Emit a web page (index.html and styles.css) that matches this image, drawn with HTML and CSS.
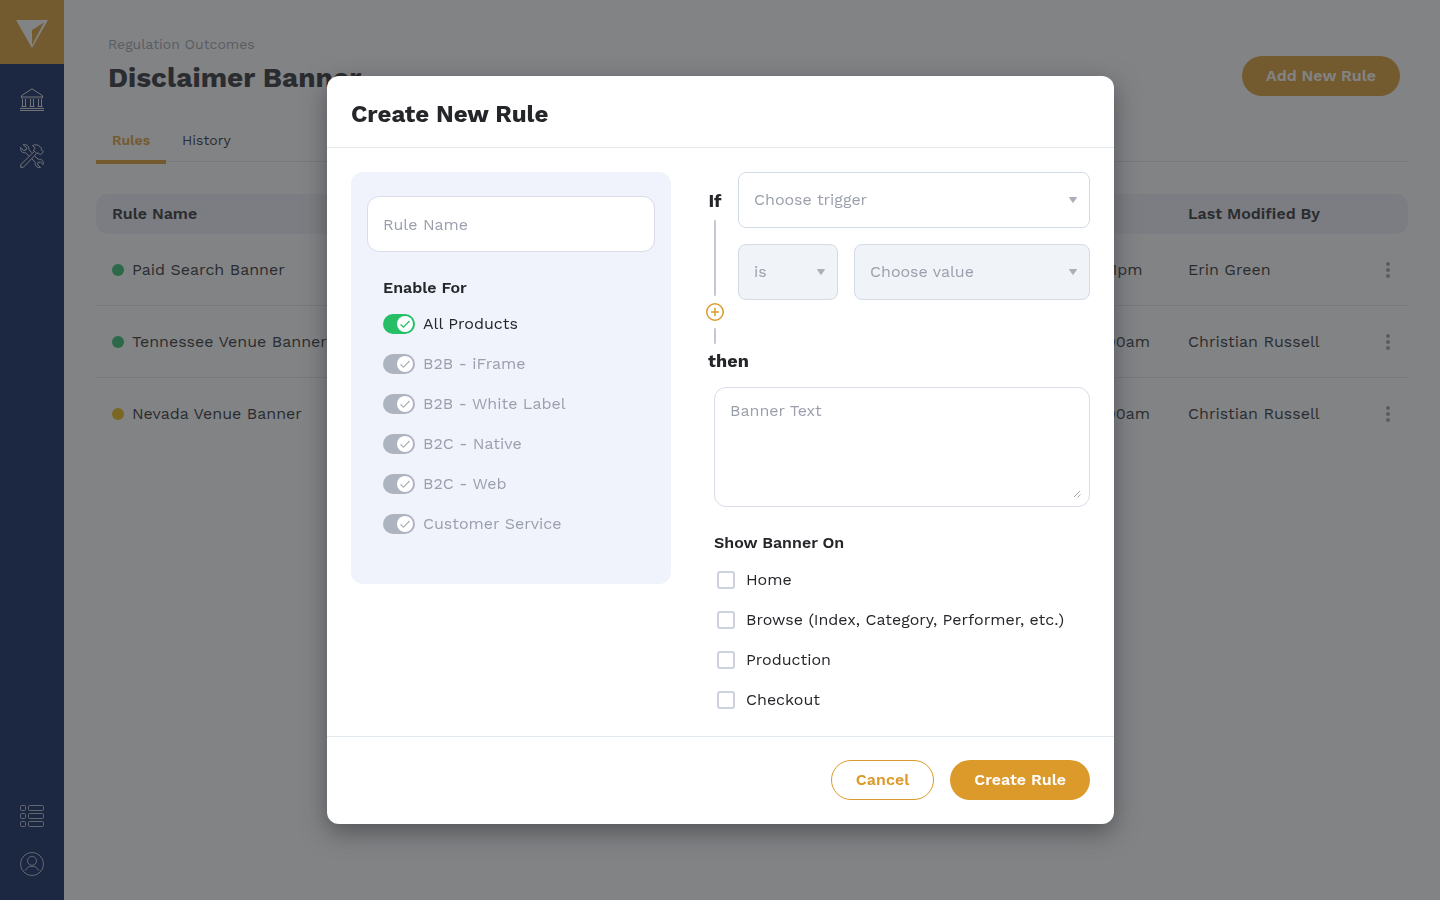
FILE: index.html
```html
<!DOCTYPE html>
<html lang="en">
<head>
    <meta charset="UTF-8">
    <meta name="viewport" content="width=device-width, initial-scale=1.0">
    <title>Disclaimer Banner</title>
    <link rel="stylesheet" href="styles.css">
</head>
<body>
    <div class="app">
        <aside class="sidebar">
            <a class="logo" href="#" aria-label="Home">
                <svg width="32" height="28" viewBox="0 0 32 28">
                    <path fill="#fff" fill-rule="evenodd" d="M0 0H32L16 28ZM28 2.6L16 10V25.2Z"/>
                </svg>
            </a>
            <nav class="side-nav">
                <a href="#" aria-label="Regulation">
                    <svg class="icon" viewBox="0 0 24 24">
                        <path d="M1.500 10V7.700L12 .8l10.500 6.900V10"/>
                        <path class="band" d="M1 8h22v2.500H1z"/>
                        <path d="M2.500 11v8M5.500 11v8M10.500 11v8M13.500 11v8M18.500 11v8M21.500 11v8M1.500 18.500h5M9.500 18.500h5M17.500 18.500h5"/>
                        <path d="M0 20.500h24M0 22.500h24"/>
                    </svg>
                </a>
                <a href="#" aria-label="Tools">
                    <svg class="icon" viewBox="0 0 24 24">
                        <path d="M3.200.8L6.600 3.600 6 6 3.500 6.600.8 3.400C-.1 6.700 2 9.200 5.500 8.700L8.800 12M3.200.8C6.500-.2 9.400 2.300 8.700 5.500L11.800 8.600"/>
                        <path d="M14.800 12.300L18.300 15.300C21.500 14.700 24.200 17.300 23.200 20.600L20.500 18 18 18.500 17.500 20.800 20.500 23.400C17.200 24.200 14.700 21.800 15.300 18.500L12 15"/>
                        <path d="M.8 20.600L14.500 7.200 16.700 9.400 3.400 23.300H.7z"/>
                        <path d="M14.500 7.200L13.400 6 15.200 4.300 12.500 1.500C15.500.2 18.200.8 20 2.600L21.500 4.200 21.300 5.700 23.400 7.800 20.300 10.900 18.300 8.800 16.700 9.400"/>
                    </svg>
                </a>
            </nav>
            <nav class="side-nav side-nav-bottom">
                <a href="#" aria-label="Lists">
                    <svg class="icon" viewBox="0 0 24 24">
                        <rect x=".5" y="1.500" width="5" height="5" rx="1"/>
                        <rect x="8.500" y="1.500" width="15" height="5" rx="1"/>
                        <rect x=".5" y="9.500" width="5" height="5" rx="1"/>
                        <rect x="8.500" y="9.500" width="15" height="5" rx="1"/>
                        <rect x=".5" y="17.500" width="5" height="5" rx="1"/>
                        <rect x="8.500" y="17.500" width="15" height="5" rx="1"/>
                    </svg>
                </a>
                <a href="#" aria-label="Account">
                    <svg class="icon" viewBox="0 0 24 24">
                        <circle cx="12" cy="12" r="11.500"/>
                        <circle cx="12" cy="8.800" r="4.500"/>
                        <path d="M5.200 18.700C6.300 15.800 9 14.300 12 14.300s5.700 1.500 6.800 4.400"/>
                    </svg>
                </a>
            </nav>
        </aside>

        <main class="content">
            <header class="page-header">
                <div>
                    <p class="breadcrumb">Regulation Outcomes</p>
                    <h1>Disclaimer Banner</h1>
                </div>
                <button type="button" class="btn btn-primary">Add New Rule</button>
            </header>

            <nav class="tabs">
                <a href="#" class="tab active">Rules</a>
                <a href="#" class="tab">History</a>
            </nav>

            <table class="rules">
                <thead>
                    <tr>
                        <th>Rule Name</th>
                        <th class="col-date">Last Modified</th>
                        <th class="col-user">Last Modified By</th>
                        <th class="col-menu"></th>
                    </tr>
                </thead>
                <tbody>
                    <tr>
                        <td><span class="dot"></span>Paid Search Banner</td>
                        <td>03/12/2021 12:11pm</td>
                        <td>Erin Green</td>
                        <td><button type="button" class="kebab" aria-label="Options"><i></i><i></i><i></i></button></td>
                    </tr>
                    <tr>
                        <td><span class="dot"></span>Tennessee Venue Banner</td>
                        <td>03/10/2021 10:00am</td>
                        <td>Christian Russell</td>
                        <td><button type="button" class="kebab" aria-label="Options"><i></i><i></i><i></i></button></td>
                    </tr>
                    <tr>
                        <td><span class="dot dot-pending"></span>Nevada Venue Banner</td>
                        <td>03/10/2021 10:00am</td>
                        <td>Christian Russell</td>
                        <td><button type="button" class="kebab" aria-label="Options"><i></i><i></i><i></i></button></td>
                    </tr>
                </tbody>
            </table>
        </main>
    </div>

    <div class="overlay">
        <form class="modal" role="dialog" aria-labelledby="modalTitle">
            <header class="modal-header">
                <h2 id="modalTitle">Create New Rule</h2>
            </header>

            <div class="modal-body">
                <section class="panel">
                    <input type="text" class="field" placeholder="Rule Name" aria-label="Rule Name">
                    <div class="enable">
                        <h3>Enable For</h3>
                        <label class="option"><input type="checkbox" class="toggle" checked>All Products</label>
                        <label class="option off"><input type="checkbox" class="toggle" checked disabled>B2B - iFrame</label>
                        <label class="option off"><input type="checkbox" class="toggle" checked disabled>B2B - White Label</label>
                        <label class="option off"><input type="checkbox" class="toggle" checked disabled>B2C - Native</label>
                        <label class="option off"><input type="checkbox" class="toggle" checked disabled>B2C - Web</label>
                        <label class="option off"><input type="checkbox" class="toggle" checked disabled>Customer Service</label>
                    </div>
                </section>

                <section class="logic">
                    <div class="condition">
                        <div class="rail">
                            <span class="keyword">If</span>
                            <span class="line line-long"></span>
                            <button type="button" class="add" aria-label="Add condition">
                                <svg width="18" height="18" viewBox="0 0 18 18">
                                    <circle cx="9" cy="9" r="8.250"/>
                                    <path d="M9 5v8M5 9h8"/>
                                </svg>
                            </button>
                            <span class="line"></span>
                        </div>
                        <div class="selects">
                            <select class="field trigger" aria-label="Trigger">
                                <option>Choose trigger</option>
                            </select>
                            <select class="field" aria-label="Operator" disabled>
                                <option>is</option>
                            </select>
                            <select class="field" aria-label="Value" disabled>
                                <option>Choose value</option>
                            </select>
                        </div>
                    </div>
                    <div class="keyword then">then</div>

                    <div class="result">
                        <textarea class="field" placeholder="Banner Text" aria-label="Banner Text"></textarea>
                        <h3>Show Banner On</h3>
                        <label class="option"><input type="checkbox" class="check">Home</label>
                        <label class="option"><input type="checkbox" class="check">Browse (Index, Category, Performer, etc.)</label>
                        <label class="option"><input type="checkbox" class="check">Production</label>
                        <label class="option"><input type="checkbox" class="check">Checkout</label>
                    </div>
                </section>
            </div>

            <footer class="modal-footer">
                <button type="button" class="btn btn-outline">Cancel</button>
                <button type="submit" class="btn btn-primary">Create Rule</button>
            </footer>
        </form>
    </div>
</body>
</html>
```

FILE: styles.css
```css
* {
    box-sizing: border-box;
}

body {
    margin: 0;
    font-family: "Work Sans", Inter, "Noto Sans", sans-serif;
    font-size: 16px;
    line-height: 24px;
    color: #242629;
    background: #fff;
}

h1, h2, h3, p {
    margin: 0;
}

input, select, textarea, button {
    font: inherit;
    color: inherit;
}

button {
    cursor: pointer;
}

.app {
    display: flex;
    min-height: 100vh;
}

/* sidebar */
.sidebar {
    width: 64px;
    flex-shrink: 0;
    display: flex;
    flex-direction: column;
    background: #001a55;
}

.logo {
    height: 64px;
    display: flex;
    justify-content: center;
    align-items: center;
    padding-top: 4px;
    background: #dc9a2a;
}

.side-nav {
    display: flex;
    flex-direction: column;
    align-items: center;
    gap: 32px;
    padding: 24px 0;
}

.side-nav-bottom {
    gap: 24px;
    margin-top: auto;
}

.side-nav a {
    height: 24px;
}

.icon {
    display: block;
    width: 24px;
    height: 24px;
    fill: none;
    stroke: #fff;
    stroke-width: 1;
    overflow: visible;
    opacity: 0.85;
}

.side-nav-bottom .icon {
    opacity: 0.7;
}

.icon .band {
    fill: #fff;
    stroke: none;
    opacity: 0.5;
}

/* page */
.content {
    flex: 1;
    padding: 32px;
}

.page-header {
    display: flex;
    justify-content: space-between;
    align-items: flex-end;
    padding: 0 8px 0 12px;
}

.breadcrumb {
    font-size: 14px;
    color: #9a9fa8;
}

h1 {
    padding-top: 4px;
    font-size: 28px;
    line-height: 36px;
}

.btn {
    height: 40px;
    padding: 0 24px;
    border: none;
    border-radius: 20px;
    font-weight: 600;
}

.btn-primary {
    background: #dc9a2a;
    color: #fff;
}

.btn-outline {
    background: #fff;
    color: #dc9a2a;
    border: 1px solid #dc9a2a;
}

.tabs {
    display: flex;
    height: 42px;
    margin-top: 24px;
    border-bottom: 1px solid #e4e5e9;
}

.tab {
    height: 44px;
    padding: 8px 16px;
    font-size: 14px;
    color: inherit;
    text-decoration: none;
}

.tab.active {
    color: #dc9a2a;
    font-weight: 600;
    border-bottom: 4px solid #dc9a2a;
}

.rules {
    width: 100%;
    margin-top: 32px;
    border-collapse: separate;
    border-spacing: 0;
    table-layout: fixed;
}

.rules th {
    height: 40px;
    padding: 0 16px;
    text-align: left;
    font-weight: 600;
    background: #f0f1f7;
}

.rules th:first-child {
    border-radius: 12px 0 0 12px;
}

.rules th:last-child {
    border-radius: 0 12px 12px 0;
}

.rules td {
    height: 72px;
    padding: 0 16px;
    white-space: nowrap;
    border-bottom: 1px solid #e4e5e9;
}

.rules tr:last-child td {
    border-bottom: none;
}

.col-date {
    width: 192px;
}

.col-user {
    width: 196px;
}

.col-menu {
    width: 40px;
}

.rules td:last-child {
    padding: 0 8px;
}

.dot {
    display: inline-block;
    width: 12px;
    height: 12px;
    margin-right: 8px;
    border-radius: 50%;
    background: #26bf68;
    vertical-align: -1px;
}

.dot-pending {
    background: #ecb90e;
}

.kebab {
    display: flex;
    flex-direction: column;
    align-items: center;
    gap: 2px;
    width: 24px;
    padding: 0;
    border: none;
    background: none;
}

.kebab i {
    width: 4px;
    height: 4px;
    border-radius: 50%;
    background: #9a9fa8;
}

/* modal */
.overlay {
    position: fixed;
    inset: 0;
    display: flex;
    justify-content: center;
    align-items: center;
    padding-left: 1px;
    background: rgba(47, 48, 51, 0.6);
}

.modal {
    width: 100%;
    max-width: 787px;
    background: #fff;
    border-radius: 12px;
    box-shadow: 0 8px 24px rgba(36, 38, 41, 0.5);
}

.modal-header {
    padding: 26px 24px 21px;
    border-bottom: 1px solid #e4e7ec;
}

h2 {
    font-size: 24px;
    line-height: 24px;
}

h3 {
    font-size: 16px;
    font-weight: 600;
}

.modal-body {
    display: flex;
    align-items: flex-start;
    gap: 35px;
    padding: 24px 24px 16px;
}

.panel {
    width: 320px;
    padding: 24px 16px 40px;
    border-radius: 12px;
    background: #f0f3fc;
}

.field {
    display: block;
    width: 100%;
    height: 56px;
    padding: 0 15px;
    border: 1px solid #d9dce9;
    border-radius: 12px;
    background: #fff;
    outline: none;
}

.field::placeholder {
    color: #9a9fab;
    opacity: 1;
}

.enable {
    padding: 24px 16px 0;
}

.enable h3 {
    margin-bottom: 4px;
}

.result h3 {
    margin-bottom: 5px;
}

.option {
    display: flex;
    align-items: center;
    height: 40px;
}

.option.off {
    color: #9a9fab;
}

.toggle {
    appearance: none;
    width: 32px;
    height: 20px;
    margin: 0 8px 0 0;
    padding: 2px;
    border-radius: 10px;
    background: #26bf68;
}

.toggle::before {
    content: "";
    display: block;
    width: 16px;
    height: 16px;
    margin-left: 12px;
    border-radius: 50%;
    background: #fff url("data:image/svg+xml,%3Csvg xmlns='http://www.w3.org/2000/svg' viewBox='0 0 16 16' fill='none' stroke='%2326bf68' stroke-width='1.3'%3E%3Cpath d='M3.500 8.500L6.500 11.200 12.500 5'/%3E%3C/svg%3E");
}

.toggle:disabled {
    background: #adb3bf;
}

.toggle:disabled::before {
    background-image: url("data:image/svg+xml,%3Csvg xmlns='http://www.w3.org/2000/svg' viewBox='0 0 16 16' fill='none' stroke='%23adb3bf' stroke-width='1.3'%3E%3Cpath d='M3.500 8.500L6.500 11.200 12.500 5'/%3E%3C/svg%3E");
}

.logic {
    flex: 1;
}

.condition {
    display: flex;
    gap: 14px;
}

.rail {
    display: flex;
    flex-direction: column;
    align-items: center;
    width: 18px;
    padding-top: 17px;
}

.keyword {
    font-size: 18px;
    font-weight: 700;
}

.line {
    width: 2px;
    height: 16px;
    border-radius: 1px;
    background: #c3c7d6;
}

.line-long {
    height: 76px;
    margin-top: 7px;
}

.add {
    height: 18px;
    margin: 7px 0;
    padding: 0;
    border: none;
    background: none;
}

.add svg {
    display: block;
    fill: none;
    stroke: #dc9a2a;
    stroke-width: 1.5;
}

.selects {
    flex: 1;
    display: grid;
    grid-template-columns: 100px 1fr;
    gap: 16px;
    align-content: start;
}

.trigger {
    grid-column: 1 / -1;
}

select.field {
    appearance: none;
    border-color: #d3dbe5;
    border-radius: 8px;
    color: #9a9fab;
    opacity: 1;
    background: #fff url("data:image/svg+xml,%3Csvg xmlns='http://www.w3.org/2000/svg' width='8' height='6' viewBox='0 0 8 6'%3E%3Cpath fill='%23a9b0ba' stroke='%23a9b0ba' stroke-linejoin='round' d='M.5.5h7L4 5.500z'/%3E%3C/svg%3E") no-repeat right 12px center;
}

select.field:disabled {
    background-color: #f0f4f8;
}

.then {
    padding: 5px 2px 0;
}

.result {
    padding: 14px 0 0 8px;
}

textarea.field {
    height: 120px;
    margin-bottom: 24px;
    padding: 11px 15px;
    resize: none;
    background: #fff url("data:image/svg+xml,%3Csvg xmlns='http://www.w3.org/2000/svg' width='8' height='8' viewBox='0 0 8 8' stroke='%23a4a7ae'%3E%3Cpath d='M1 7L7 1M4.500 7.500L7.500 4.500'/%3E%3C/svg%3E") no-repeat right 8px bottom 8px;
}

.check {
    appearance: none;
    width: 18px;
    height: 18px;
    margin: 0 11px 0 3px;
    border: 2px solid #ced2e0;
    border-radius: 3px;
    background: #fff;
}

.modal-footer {
    display: flex;
    justify-content: flex-end;
    align-items: center;
    gap: 16px;
    height: 88px;
    padding: 0 24px 1px;
    border-top: 1px solid #e2eaf0;
}
```
